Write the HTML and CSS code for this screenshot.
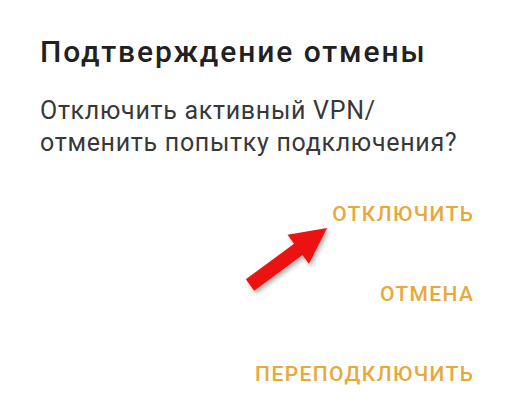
FILE: index.html
```html
<!DOCTYPE html>
<html lang="ru">
<head>
<meta charset="utf-8">
<title>Подтверждение отмены</title>
<link rel="stylesheet" href="styles.css">
</head>
<body>
<div class="dialog">
  <h1 class="title">Подтверждение отмены</h1>
  <p class="message">Отключить активный VPN/<br>отменить попытку подключения?</p>
  <div class="actions">
    <button class="action">ОТКЛЮЧИТЬ</button>
    <button class="action">ОТМЕНА</button>
    <button class="action">ПЕРЕПОДКЛЮЧИТЬ</button>
  </div>
  <svg class="pointer" width="511" height="416" viewBox="0 0 511 416" aria-hidden="true">
    <g transform="translate(250 285) rotate(-36.5)">
      <polygon points="0,-7 60,-7 60,-18 96,0 60,18 60,7 0,7" fill="#ec1212"/>
    </g>
  </svg>
</div>
</body>
</html>
```
FILE: styles.css
```css
html, body {
  margin: 0;
  padding: 0;
  background: #ffffff;
}
.dialog {
  position: relative;
  width: 511px;
  height: 416px;
  box-sizing: border-box;
  padding: 34px 38px 0 40px;
  font-family: Roboto, "Noto Sans", sans-serif;
}
.title {
  margin: 0;
  font-size: 30px;
  line-height: 36px;
  font-weight: 500;
  letter-spacing: 1.9px;
  color: #212121;
}
.message {
  margin: 25px 0 0 0;
  font-size: 25px;
  line-height: 32px;
  font-weight: 400;
  letter-spacing: 0.7px;
  color: #383838;
}
.actions {
  margin-top: 15px;
  margin-right: -1.4px;
  display: flex;
  flex-direction: column;
  align-items: flex-end;
}
.action {
  border: 0;
  background: none;
  padding: 0;
  height: 80px;
  line-height: 80px;
  font-family: Roboto, "Noto Sans", sans-serif;
  font-size: 21px;
  font-weight: 500;
  letter-spacing: 1.4px;
  color: #e8a83a;
}
.pointer {
  position: absolute;
  left: 0;
  top: 0;
  pointer-events: none;
  filter: drop-shadow(2px 3px 2px rgba(0,0,0,0.3));
}
```
